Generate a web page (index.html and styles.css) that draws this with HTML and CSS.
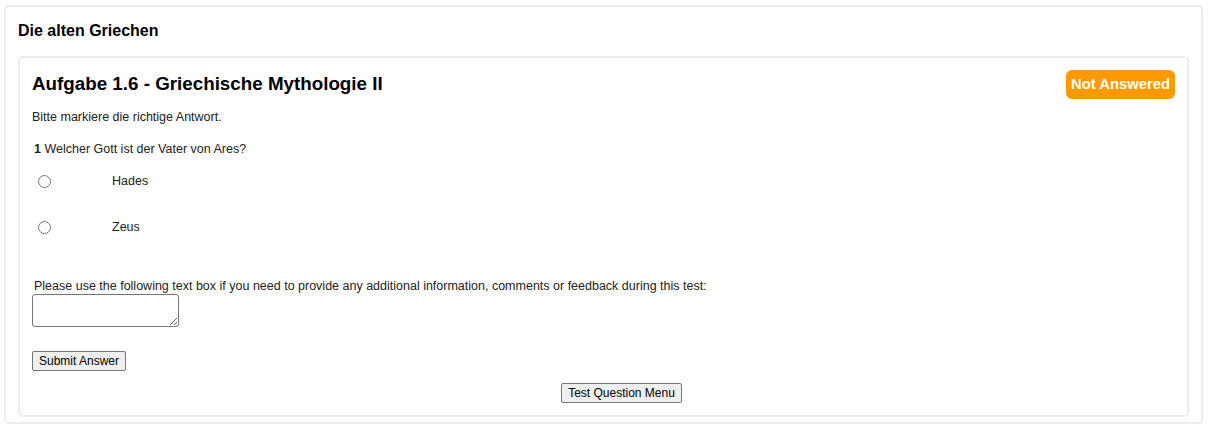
FILE: index.html
```html
<!DOCTYPE html>
<html>
<head lang="de">
    <meta charset="UTF-8">
    <title>Die alten Griechen</title>
    <link rel="stylesheet" href="styles.css">
</head>
<body>
   <div class="panel">
       <h3 class="panel-title">Die alten Griechen</h3>
       <div class="question-box">
           <div class="question-head">
               <h2>Aufgabe 1.6 - Griechische Mythologie II</h2>
               <span class="badge">Not Answered</span>
           </div>
           <p class="intro">Bitte markiere die richtige Antwort.</p>
           <p class="question"><b>1</b> Welcher Gott ist der Vater von Ares?</p>
           <ul class="answers">
               <li><input type="radio" name="q1"><label>Hades</label></li>
               <li><input type="radio" name="q1"><label>Zeus</label></li>
           </ul>
           <p class="comment-label">Please use the following text box if you need to provide any additional information, comments or feedback during this test:</p>
           <textarea class="comment"></textarea>
           <div class="submit-row"><button>Submit Answer</button></div>
           <div class="menu-row"><button>Test Question Menu</button></div>
       </div>
   </div>
</body>
</html>
```

FILE: styles.css
```css
*{
    padding: 0;
    margin: 0;
    box-sizing: border-box;
}
body{
    padding: 5px 7px 0 4px;
    font-family: "Liberation Sans", Arial, sans-serif;
    font-size: 12.5px;
    color: #222;
    background: #fff;
}
ul{
    list-style: none;
}
.panel{
    border: 2px solid #ececec;
    border-radius: 5px;
    padding: 14px 12px 7px 12px;
    height: 419px;
}
.panel-title{
    font-size: 16px;
    font-weight: bold;
    color: #000;
    line-height: 20px;
    margin-bottom: 15px;
}
.question-box{
    border: 2px solid #ececec;
    border-radius: 5px;
    padding: 12px 12px 0 12px;
    height: 361px;
}
.question-head{
    display: flex;
    justify-content: space-between;
    align-items: flex-start;
}
.question-head h2{
    font-size: 18.8px;
    font-weight: bold;
    color: #000;
    line-height: 24px;
    margin-top: 2px;
}
.badge{
    background: #ff9900;
    color: #fff;
    font-weight: bold;
    font-size: 14.8px;
    line-height: 29px;
    padding: 0 5px;
    border-radius: 6px;
}
.intro{
    margin-top: 11px;
    line-height: 14px;
}
.question{
    margin-top: 18px;
    margin-left: 2px;
    line-height: 14px;
}
.answers li{
    display: flex;
    align-items: center;
    height: 46px;
}
.answers li:first-child{
    margin-top: 2px;
}
.answers input{
    width: 13px;
    height: 13px;
    margin-left: 6px;
}
.answers label{
    margin-left: 61px;
}
.comment-label{
    margin-top: 29px;
    margin-left: 2px;
    line-height: 14px;
}
.comment{
    display: block;
    width: 147px;
    height: 33px;
    margin-top: 1px;
    border: 1px solid #767676;
    border-radius: 3px;
}
.submit-row{
    margin-top: 24px;
}
button{
    font-family: "Liberation Sans", Arial, sans-serif;
    font-size: 12px;
    padding: 2px 6px;
    height: 20px;
    border: 1px solid #767676;
    border-radius: 2px;
    background: #efefef;
    color: #000;
}
.menu-row{
    text-align: center;
    margin-top: 12px;
    padding-left: 36px;
}
```
